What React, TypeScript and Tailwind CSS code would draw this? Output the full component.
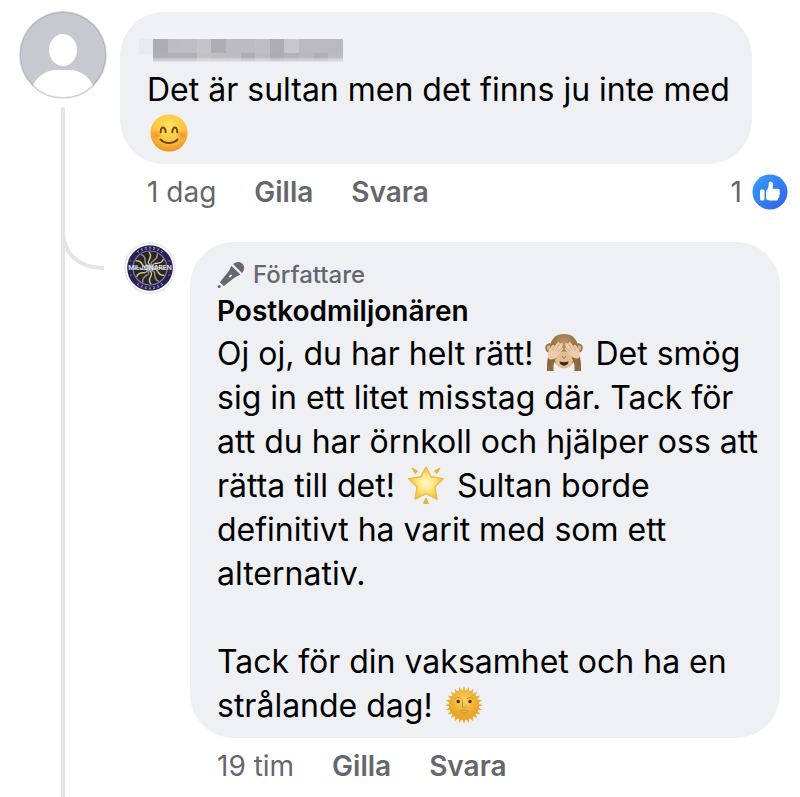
import type { ReactNode } from "react"

function SmileEmoji() {
  return (
    <svg viewBox="0 0 38 38" className="h-[38px] w-[38px]" role="img" aria-label="Leende ansikte">
      <defs>
        <radialGradient id="smile" cx="50%" cy="32%" r="68%">
          <stop offset="0" stopColor="#ffe263" />
          <stop offset="0.6" stopColor="#fdc63c" />
          <stop offset="1" stopColor="#ec9227" />
        </radialGradient>
        <radialGradient id="blush">
          <stop offset="0" stopColor="#f57a35" stopOpacity="0.75" />
          <stop offset="1" stopColor="#f57a35" stopOpacity="0" />
        </radialGradient>
      </defs>
      <circle cx="19" cy="19" r="18.6" fill="url(#smile)" />
      <circle cx="6.5" cy="21" r="5.5" fill="url(#blush)" />
      <circle cx="31.5" cy="21" r="5.5" fill="url(#blush)" />
      <g fill="none" stroke="#70440f" strokeWidth="2" strokeLinecap="round">
        <path d="M10.7 18.2C11 12 15 12 15.7 18.2" />
        <path d="M22.3 18.2C23 12 27 12 27.3 18.2" />
        <path d="M10.5 25.5C15 30.2 23 30.2 27.5 25.5" />
      </g>
    </svg>
  )
}

function MonkeyEmoji() {
  return (
    <svg viewBox="0 0 38 38" className="h-[38px] w-[38px]" role="img" aria-label="Apa som blundar">
      <defs>
        <radialGradient id="fur" cx="50%" cy="30%">
          <stop offset="0" stopColor="#bd9a66" />
          <stop offset="1" stopColor="#8d6b42" />
        </radialGradient>
      </defs>
      <circle cx="5" cy="14" r="4.8" fill="#9a734d" />
      <circle cx="33" cy="14" r="4.8" fill="#9a734d" />
      <circle cx="4.6" cy="14" r="2.8" fill="#deae8c" />
      <circle cx="33.4" cy="14" r="2.8" fill="#deae8c" />
      <path d="M19 0C10 0 5 6 5 15c0 9 4 17 14 17s14-8 14-17C33 6 28 0 19 0z" fill="url(#fur)" />
      <ellipse cx="19" cy="26" rx="9" ry="8.5" fill="#e0bd94" />
      <path d="M3.500 21.500l8 2c-2 3-3 6-3 9V37H2v-5c0-4 .5-7 1.500-10.500z" fill="#90693f" />
      <path d="M34.500 21.500l-8 2c2 3 3 6 3 9V37H36v-5c0-4-.5-7-1.500-10.500z" fill="#90693f" />
      <g fill="#ecccac">
        <path d="M3 23c-.5-5 2-9 4-11.500 1-1.500 2.800-.5 2.300 1l3-3.800c1.200-1.300 3-.2 2.300 1.300l1-.8c1.500-1 2.800.5 2 2l-1.200 2.300c1.600-.2 2.200 1.500 1 2.700l-2.600 2.700C13 21.500 12 24 8.500 25S3.500 25 3 23z" />
        <path d="M35 23c.5-5-2-9-4-11.500-1-1.500-2.800-.5-2.300 1l-3-3.800c-1.200-1.300-3-.2-2.300 1.300l-1-.8c-1.500-1-2.800.5-2 2l1.200 2.300c-1.600-.2-2.200 1.500-1 2.700l2.600 2.700c1.800 1.600 2.800 4.100 6.300 5.100s5 0 5.500-2z" />
      </g>
      <g fill="none" stroke="#c79c76" strokeWidth="0.7" strokeLinecap="round">
        <path d="M9.200 12.800l-1.900 3.400M14.500 10.200l-3.800 5.800M16.200 14.500l-3.200 3.600M28.800 12.800l1.900 3.400M23.500 10.200l3.800 5.800M21.800 14.500l3.200 3.600" />
      </g>
      <path d="M17.600 23l.8.800M20.400 23l-.8.800" stroke="#6c482b" strokeLinecap="round" />
      <path d="M14.500 27.500q4.500 1.500 9 0c-.3 5.500-8.700 5.500-9 0z" fill="#3d2115" />
    </svg>
  )
}

function StarEmoji() {
  return (
    <svg viewBox="0 0 38 38" className="h-[38px] w-[38px]" role="img" aria-label="Lysande stjärna">
      <defs>
        <radialGradient id="star">
          <stop offset="0" stopColor="#fffbd0" />
          <stop offset="0.5" stopColor="#fde67e" />
          <stop offset="1" stopColor="#f3c23c" />
        </radialGradient>
      </defs>
      <g fill="#e6b13c" stroke="#e6b13c" strokeLinejoin="round">
        <path d="M5 2l5.500 3-2.500 2.500zM33 2l-5.500 3 2.500 2.500zM19 32l-2.500 5.500h5z" />
      </g>
      <path
        d="M19 1l5.200 9.800 12.300 1.800-8.600 8.500 2.100 12L19 27.600 8 33.100l2.100-12-8.600-8.500 12.300-1.800z"
        fill="url(#star)"
        stroke="#eabb43"
        strokeWidth="1.4"
        strokeLinejoin="round"
      />
    </svg>
  )
}

function SunEmoji() {
  const rays = Array.from({ length: 24 }, (_, i) => i * 15)
  return (
    <svg viewBox="0 0 38 38" className="h-[38px] w-[38px]" role="img" aria-label="Sol med ansikte">
      <defs>
        <radialGradient id="sun" cx="50%" cy="35%">
          <stop offset="0" stopColor="#fbd461" />
          <stop offset="1" stopColor="#eaa62c" />
        </radialGradient>
      </defs>
      {rays.map((angle) => (
        <path key={angle} d="M17.4 5l1.600-5 1.600 5z" fill="#e9ab33" transform={`rotate(${angle} 19 19)`} />
      ))}
      <circle cx="19" cy="19" r="15" fill="url(#sun)" />
      <g fill="none" stroke="#cf8c27" strokeWidth="0.9" strokeLinecap="round">
        <path d="M9.500 12.500q3.500-2.500 6.500 0M22 12.500q3-2.500 6.500 0M17.500 14v7q1.500 1.500 3.500.3M14.500 25.500q4.500 3.500 9 0M15.500 24.500q3.500-1.200 7 0" />
      </g>
      <circle cx="13.2" cy="15.5" r="1.7" fill="#5c2a0d" />
      <circle cx="25" cy="15.5" r="1.7" fill="#5c2a0d" />
    </svg>
  )
}

function PersonAvatar() {
  return (
    <svg viewBox="0 0 88 88" className="h-[88px] w-[88px] shrink-0" role="img" aria-label="Profilbild">
      <clipPath id="person">
        <circle cx="44" cy="44" r="43" />
      </clipPath>
      <g clipPath="url(#person)">
        <rect width="88" height="88" fill="#c8c8d0" />
        <ellipse cx="44" cy="39" rx="14" ry="16" fill="#fff" />
        <path d="M13 88V77C17 66 26 59 38 59H50C62 59 71 66 75 77V88z" fill="#fff" />
      </g>
      <circle cx="44" cy="44" r="43" fill="none" stroke="#000" strokeOpacity="0.14" strokeWidth="1.8" />
    </svg>
  )
}

function ShowLogo() {
  const rays = Array.from({ length: 12 }, (_, i) => i * 30)
  const marks = [-36, -24, -12, 0, 12, 24, 36, 144, 156, 168, 180, 192, 204, 216]
  return (
    <svg viewBox="0 0 52 52" className="h-[52px] w-[52px] shrink-0" role="img" aria-label="Postkodmiljonären">
      <circle cx="26" cy="26" r="25" fill="#fff" stroke="#e4e5ea" strokeWidth="1.5" />
      <circle cx="26" cy="26" r="22.8" fill="#292055" />
      {marks.map((angle) => (
        <path key={angle} d="M25 5.200h2M26 5.200v2.400" stroke="#a39cc4" strokeWidth="0.9" transform={`rotate(${angle} 26 26)`} />
      ))}
      <circle cx="26" cy="26" r="17" fill="#2a2427" stroke="#70809c" strokeWidth="1.2" />
      {rays.map((angle) => (
        <path
          key={angle}
          d="M26 23c-5.500-4 4.500-7-1-13"
          fill="none"
          stroke={angle % 60 ? "#8f929a" : "#cfc07a"}
          strokeWidth="1.5"
          transform={`rotate(${angle} 26 26)`}
        />
      ))}
      <circle cx="26" cy="26" r="3.5" fill="#8e9dac" />
      <g fill="#c98a5a">
        <circle cx="7" cy="19" r="0.7" />
        <circle cx="7" cy="33" r="0.7" />
        <circle cx="45" cy="19" r="0.7" />
        <circle cx="45" cy="33" r="0.7" />
      </g>
      <text x="26" y="28.3" textAnchor="middle" fontSize="6.6" fontWeight="600" fill="#e9e7f2">
        MILJONÄREN
      </text>
    </svg>
  )
}

function MicIcon() {
  return (
    <svg viewBox="0 0 28 28" className="h-7 w-7" fill="#65676f" aria-hidden="true">
      <path d="M16.200 3.200C19 .6 23 .4 25.400 2.800s2.400 6.300-.4 9.200z" />
      <path fillRule="evenodd" d="M14.400 4.800l9 8.800-5.400 2.600L6.800 25 2.900 21.200l9.100-11.400zM13.800 13.200l-2.200 2.200 1.400 1.300 2.200-2.200z" />
      <circle cx="2.2" cy="25.5" r="1.5" />
    </svg>
  )
}

function LikeBadge() {
  return (
    <svg viewBox="0 0 36 36" className="h-9 w-9" role="img" aria-label="Gilla-reaktion">
      <defs>
        <linearGradient id="like" x1="0" y1="0" x2="1" y2="1">
          <stop offset="0" stopColor="#35a1f7" />
          <stop offset="1" stopColor="#325fed" />
        </linearGradient>
      </defs>
      <circle cx="18" cy="18" r="17.5" fill="url(#like)" />
      <rect x="8" y="15.5" width="4.5" height="11" rx="1.5" fill="#fff" />
      <path
        d="M14 17c2.200-2 2.700-4 2.700-7.500 0-3 4.300-2.700 4.300 1.500 0 1.500-.3 2.500-.5 3.700h5.200c2 0 2.800 1.800 1.700 3.200 1 1 .8 2.500-.3 3.200.6 1.200.1 2.300-.9 2.800.2 1.600-.7 2.600-2.200 2.600h-5c-2 0-3.500-.5-5-1.500z"
        fill="#fff"
      />
    </svg>
  )
}

const nameBlocks = [
  { top: "#aeaeb1", bottom: "#afafb2" },
  { top: "#bebec1", bottom: "#b0b0b3" },
  { top: "#bfbfc2", bottom: "#b0b0b3" },
  { top: "#c5c5c8", bottom: "#c2c2c5" },
  { top: "#aeaeb1", bottom: "#bebec1" },
  { top: "#bcbcbf", bottom: "#bcbcbf" },
  { top: "#bcbcbf", bottom: "#afafb2" },
  { top: "#bfbfc2", bottom: "#bcbcbf" },
  { top: "#aeaeb1", bottom: "#adadb0" },
  { top: "#c7c7ca", bottom: "#b3b3b6" },
  { top: "#bababd", bottom: "#b8b8bb" },
  { top: "#bababd", bottom: "#b0b0b3" },
  { top: "#bababd", bottom: "#bcbcbf" },
]

function HiddenName() {
  return (
    <svg viewBox="0 0 206 36" className="-ml-2 block h-9 w-[206px]" shapeRendering="crispEdges" role="img" aria-label="Dolt namn">
      <defs>
        <linearGradient id="fade" x1="0" y1="0" x2="0" y2="1">
          <stop offset="0" stopColor="#eff0f4" stopOpacity="0" />
          <stop offset="1" stopColor="#eff0f4" />
        </linearGradient>
      </defs>
      <rect x="14" y="0" width="190" height="7" fill="#f2f2f6" />
      <rect x="0" y="7" width="15" height="15" fill="#e9eaed" />
      {nameBlocks.map((block, i) => (
        <g key={i}>
          <rect x={14 + i * 14.6} y="7" width="15" height="15" fill={block.top} />
          <rect x={14 + i * 14.6} y="21" width="15" height="9" fill={block.bottom} />
        </g>
      ))}
      <rect x="0" y="25" width="206" height="6" fill="url(#fade)" />
    </svg>
  )
}

function Emoji({ children }: { children: ReactNode }) {
  return <span className="mx-[3px] inline-block align-[-7px] leading-none">{children}</span>
}

function Actions({ time }: { time: string }) {
  return (
    <div className="flex items-center gap-[38px] text-[28px] leading-8 text-[#65676b]">
      <span>{time}</span>
      <button type="button" className="font-semibold">Gilla</button>
      <button type="button" className="font-semibold">Svara</button>
    </div>
  )
}

export default function App() {
  return (
    <main className="flex gap-[13px] bg-white pt-[11px] pr-3 pl-[19px] font-['Inter',sans-serif] text-black">
      <div className="relative flex flex-col items-center">
        <PersonAvatar />
        <div className="mt-2 w-1 flex-1 rounded-t-full bg-[#e3e4e9]" />
        <svg viewBox="0 0 44 48" className="absolute top-[212px] left-[42px] h-12 w-11" fill="none" stroke="#e3e4e9" strokeWidth="4" aria-hidden="true">
          <path d="M2 0V8C2 30 17 45 43 45" />
        </svg>
      </div>

      <div className="min-w-0 flex-1 pt-px">
        <article>
          <div className="mr-9 rounded-[44px] bg-[#eff0f4] px-[27px] pt-5 pb-2">
            <HiddenName />
            <p className="text-[32px] leading-[44px] whitespace-nowrap">
              Det är sultan men det finns ju inte med
              <br />
              <Emoji><SmileEmoji /></Emoji>
            </p>
          </div>
          <div className="mt-2.5 flex items-center justify-between">
            <div className="pl-[27px]"><Actions time="1 dag" /></div>
            <div className="flex items-center gap-2.5 text-[28px] leading-8 text-[#65676b]">
              <span>1</span>
              <LikeBadge />
            </div>
          </div>
        </article>

        <article className="mt-8 flex gap-3.5 pl-1">
          <ShowLogo />
          <div className="min-w-0 flex-1">
            <div className="mr-2 rounded-[44px] bg-[#eff0f4] px-[27px] pt-[18px] pb-2.5">
              <div className="flex items-center gap-2 text-[24px] leading-[30px] font-medium text-[#65676f]">
                <MicIcon />
                Författare
              </div>
              <h2 className="text-[28px] leading-[42px] font-semibold">Postkodmiljonären</h2>
              <p className="text-[32px] leading-[44px] whitespace-nowrap">
                Oj oj, du har helt rätt! <Emoji><MonkeyEmoji /></Emoji> Det smög
                <br />
                sig in ett litet misstag där. Tack för
                <br />
                att du har örnkoll och hjälper oss att
                <br />
                rätta till det! <Emoji><StarEmoji /></Emoji> Sultan borde
                <br />
                definitivt ha varit med som ett
                <br />
                alternativ.
              </p>
              <p className="mt-11 text-[32px] leading-[44px] whitespace-nowrap">
                Tack för din vaksamhet och ha en
                <br />
                strålande dag! <Emoji><SunEmoji /></Emoji>
              </p>
            </div>
            <div className="mt-3 pb-4 pl-[27px]"><Actions time="19 tim" /></div>
          </div>
        </article>
      </div>
    </main>
  )
}
